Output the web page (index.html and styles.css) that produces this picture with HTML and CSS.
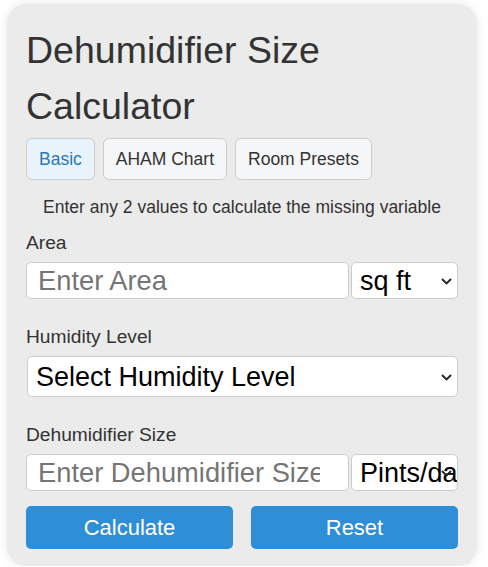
FILE: index.html
```html
<!DOCTYPE html>
<html>
<head>
    <title>Dehumidifier Size Calculator</title>
    <link rel="stylesheet" href="styles.css">
</head>
<body>
    <div class="calc">
        <h1 class="title">Dehumidifier Size Calculator</h1>
        <div class="tabs">
            <button class="tab active">Basic</button>
            <button class="tab">AHAM Chart</button>
            <button class="tab">Room Presets</button>
        </div>
        <p class="hint">Enter any 2 values to calculate the missing variable</p>

        <div class="group first">
            <label class="lab">Area</label>
            <div class="row">
                <input class="ipt" type="text" placeholder="Enter Area">
                <div class="pick unit">
                    <select>
                        <option>sq ft</option>
                        <option>sq m</option>
                    </select>
                    <svg class="arrow" width="11" height="7" viewBox="0 0 11 7"><polyline points="1,1 5.5,5.5 10,1" fill="none" stroke="#222" stroke-width="1.8"/></svg>
                </div>
            </div>
        </div>

        <div class="group">
            <label class="lab">Humidity Level</label>
            <div class="pick full">
                <select>
                    <option>Select Humidity Level</option>
                </select>
                <svg class="arrow" width="11" height="7" viewBox="0 0 11 7"><polyline points="1,1 5.5,5.5 10,1" fill="none" stroke="#222" stroke-width="1.8"/></svg>
            </div>
        </div>

        <div class="group">
            <label class="lab">Dehumidifier Size</label>
            <div class="row">
                <input class="ipt" type="text" placeholder="Enter Dehumidifier Size">
                <div class="pick unit">
                    <select>
                        <option>Pints/day</option>
                        <option>Liters/day</option>
                    </select>
                    <svg class="arrow" width="11" height="7" viewBox="0 0 11 7"><polyline points="1,1 5.5,5.5 10,1" fill="none" stroke="#222" stroke-width="1.8"/></svg>
                </div>
            </div>
        </div>

        <div class="actions">
            <button class="btn">Calculate</button>
            <button class="btn">Reset</button>
        </div>
    </div>
</body>
</html>
```

FILE: styles.css
```css
* {
    margin: 0;
    padding: 0;
    box-sizing: border-box;
}

body {
    font-family: "Liberation Sans", Arial, sans-serif;
    color: #333;
    background: #fff;
}

.calc {
    width: 470px;
    height: 562px;
    margin: 4px 0 0 7px;
    padding: 18px 19px;
    background-color: #eaebea;
    border-radius: 20px;
    box-shadow: 0 0 10px rgba(0, 0, 0, 0.1);
}

.title {
    font-size: 37.5px;
    font-weight: normal;
    line-height: 56px;
    color: #333;
}

.tabs {
    display: flex;
    gap: 8px;
    margin-top: 4px;
}

.tab {
    height: 42px;
    padding: 0 12px;
    font-family: inherit;
    font-size: 17.5px;
    color: #333;
    background-color: #f5f6f8;
    border: 1px solid #ccc;
    border-radius: 6px;
}

.tab.active {
    color: #2b78b8;
    background-color: #e8f3fb;
}

.hint {
    margin-top: 17px;
    font-size: 17.5px;
    line-height: 20px;
    text-align: center;
}

.group {
    margin-top: 27px;
}

.group.first {
    margin-top: 15px;
}

.lab {
    display: block;
    font-size: 19.2px;
    line-height: 22px;
    margin-bottom: 8px;
}

.row {
    display: flex;
    gap: 2px;
}

.ipt {
    flex: 1;
    min-width: 0;
    height: 37px;
    padding: 0 28px 0 11px;
    font-family: inherit;
    font-size: 27.3px;
    color: #333;
    background-color: #fff;
    border: 1px solid #ccc;
    border-radius: 5px;
}

.ipt::placeholder {
    color: #757575;
}

.pick {
    position: relative;
}

.pick select {
    appearance: none;
    width: 100%;
    height: 100%;
    padding: 0 0 0 8px;
    font-family: inherit;
    font-size: 27px;
    color: #000;
    background-color: #fff;
    border: 1px solid #ccc;
    border-radius: 5px;
}

.arrow {
    position: absolute;
    right: 6px;
    top: 50%;
    margin-top: -3px;
}

.unit {
    width: 107px;
    height: 37px;
}

.full {
    width: 431px;
    height: 41px;
    margin-left: 1px;
}

.actions {
    display: flex;
    gap: 18px;
    margin-top: 15px;
}

.btn {
    flex: 1;
    height: 43px;
    font-family: inherit;
    font-size: 22px;
    color: #fff;
    background-color: #2e8fd6;
    border: none;
    border-radius: 5px;
}
```
